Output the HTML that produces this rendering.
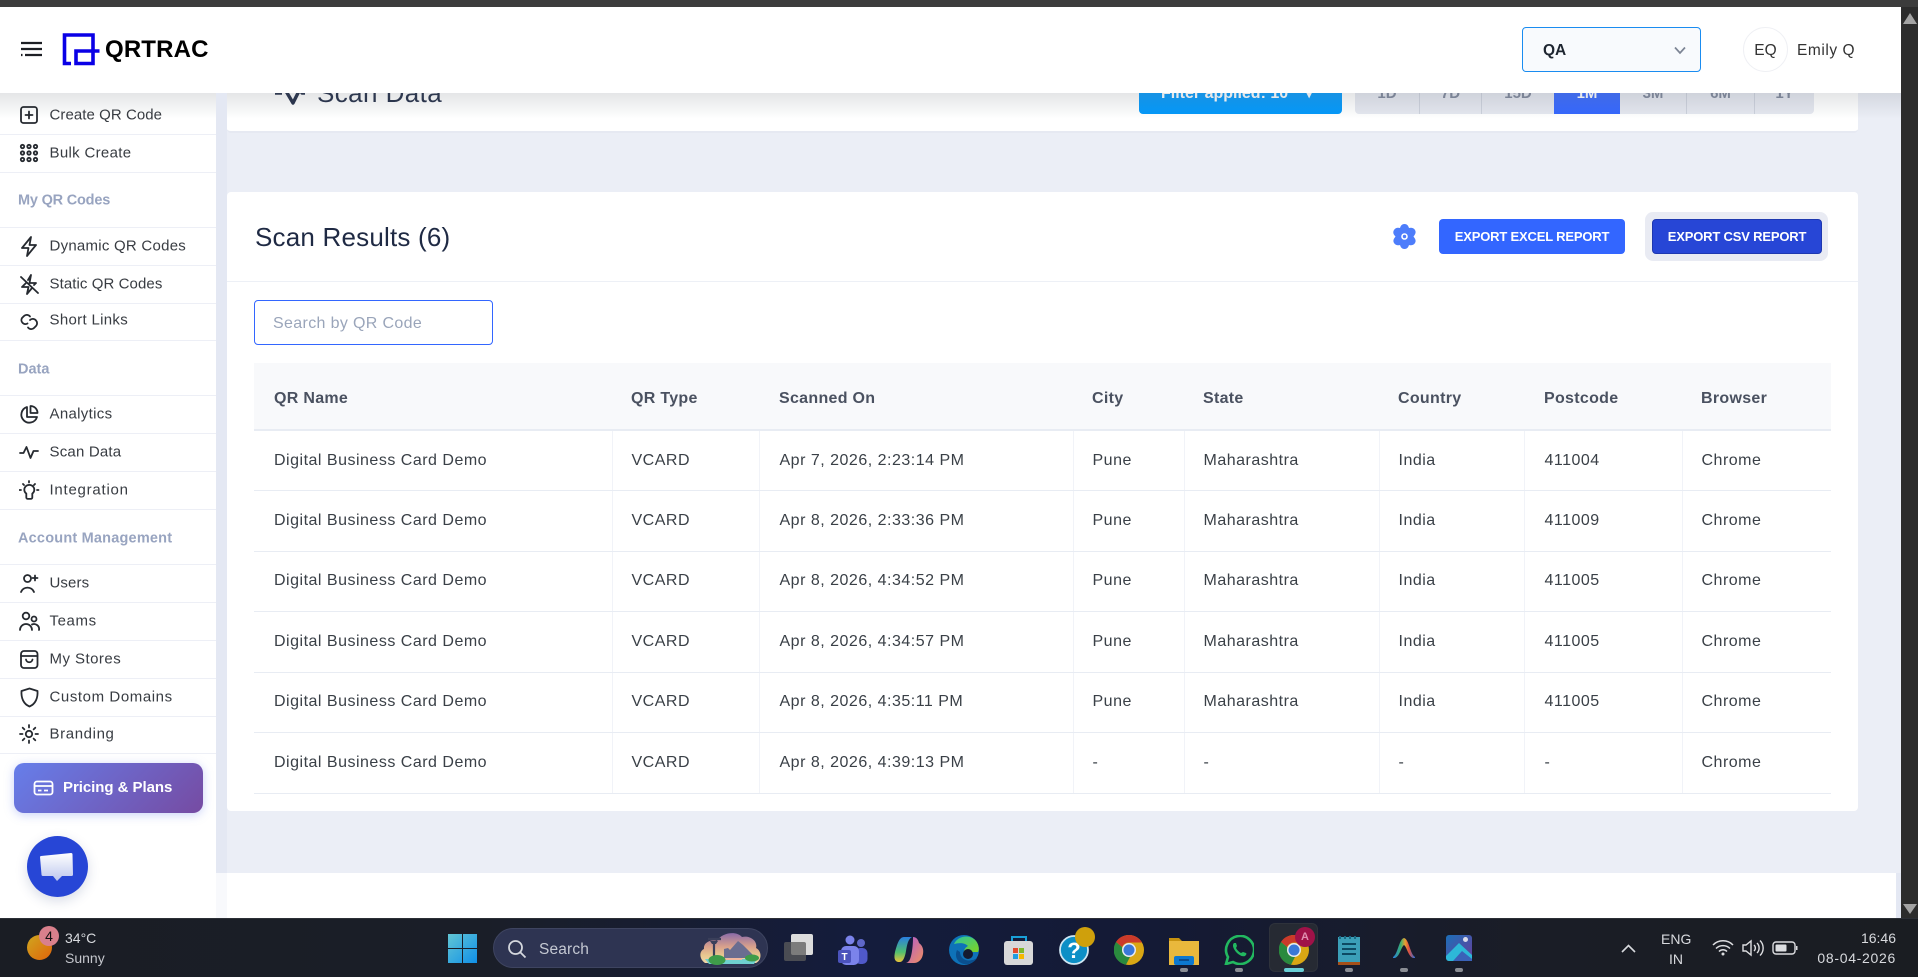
<!DOCTYPE html>
<html lang="en"><head><meta charset="utf-8"><title>QRTRAC - Scan Data</title>
<style>
*{box-sizing:border-box}
html,body{margin:0;padding:0;width:1918px;height:977px;overflow:hidden;background:#ebeef6;font-family:"Liberation Sans",sans-serif;color:#333}
.a{position:absolute}
.t{position:absolute;white-space:nowrap;line-height:20px;transform:translateY(-10px)}
.side{position:absolute;left:0;top:93px;width:216px;height:825px;background:#fff}
.nav{position:absolute;left:49.5px;font-size:15px;letter-spacing:.32px;color:#383c42;white-space:nowrap;line-height:20px;transform:translateY(-9.5px)}
.sec{position:absolute;left:18px;font-size:14.5px;font-weight:700;color:#98a4c0;white-space:nowrap;line-height:20px;transform:translateY(-9.5px)}
.ln{position:absolute;left:0;width:216px;height:1px;background:#edeff6}
.ic{position:absolute;left:19px;width:21px;height:21px;fill:none;stroke:#262a30;stroke-width:1.8;stroke-linecap:round;stroke-linejoin:round}
.card{position:absolute;background:#fff;border-radius:4px}
table{position:absolute;left:254px;top:363px;width:1577px;border-collapse:collapse;table-layout:fixed;font-size:16px;letter-spacing:.5px;color:#3a4047}
th{height:67px;background:#f8f9fb;text-align:left;font-weight:700;font-size:16px;letter-spacing:.3px;color:#4a5160;padding:6px 0 0 19px;border-bottom:2px solid #e8ecf3}
td{height:60.5px;padding:0 0 0 19px;border-bottom:1px solid #e8ecf3;border-right:1px solid #f1f3f8}
td:last-child{border-right:0}
.tb{position:absolute;left:0;top:918px;width:1918px;height:59px;background:linear-gradient(90deg,#1a1d24 0,#1a1e28 25%,#141c3c 45%,#141a35 60%,#1a1d26 80%,#1a1d22 100%);border-top:1px solid #2c2f36}
.tbi{position:absolute;top:935px;width:30px;height:30px}
.dot{position:absolute;top:968px;width:8px;height:4px;border-radius:2px;background:#8a8d94}
.tw{position:absolute;font-size:14px;color:#d8dade;white-space:nowrap;line-height:18px;transform:translateY(-9px)}
.seg{position:absolute;top:70px;height:44px;text-align:center;line-height:48px;font-size:15px;font-weight:700;color:#7c8599;border-right:1px solid #ccd1dc}
</style></head><body>

<!-- main page card 1 -->
<div class="card" style="left:227px;top:60px;width:1631px;height:73px;border-bottom:2px solid #e6e9f2"></div>
<svg class="a" style="left:275px;top:80px" width="30" height="26" viewBox="0 0 30 26" fill="none" stroke="#1f2a44" stroke-width="3.400" stroke-linejoin="round"><path d="M0 13H7M8 6 18 23 25 9 27 13H30"/></svg>
<div class="t" style="left:317px;top:93px;font-size:26px;letter-spacing:.42px;color:#1f2a44">Scan Data</div>
<div class="a" style="left:1139px;top:70px;width:203px;height:44px;background:#0098fb;border-radius:4px;color:#fff;font-size:16px;font-weight:700;line-height:48px;padding-left:22px">Filter applied: 10 <span style="margin-left:14px;font-size:10px">&#9662;</span></div>
<div class="a" style="left:1355px;top:70px;width:459px;height:44px;background:#e5e8f0;border-radius:4px"></div>
<div class="seg" style="left:1355px;width:65px">1D</div>
<div class="seg" style="left:1420px;width:62px">7D</div>
<div class="seg" style="left:1482px;width:72px;border:0">15D</div>
<div class="seg" style="left:1554px;width:66px;background:#3366ff;color:#fff;border:0">1M</div>
<div class="seg" style="left:1620px;width:67px">3M</div>
<div class="seg" style="left:1687px;width:68px">6M</div>
<div class="seg" style="left:1755px;width:59px;border:0">1Y</div>

<!-- header fade under top bar -->
<div class="a" style="left:0;top:93px;width:1901px;height:26px;background:linear-gradient(180deg,rgba(120,125,135,.2),rgba(120,125,135,0))"></div>

<!-- card 2 -->
<div class="card" style="left:227px;top:192px;width:1631px;height:619px"></div>
<div class="a" style="left:227px;top:281px;width:1631px;height:1px;background:#edf0f6"></div>
<div class="t" style="left:255px;top:237px;font-size:26px;letter-spacing:.2px;color:#1f2a44">Scan Results (6)</div>
<svg class="a" style="left:1391px;top:223px" width="27" height="27" viewBox="0 0 27 27"><path fill="#4d7dfb" d="M13.500 1c3 0 4 2.400 4.500 4 1.800-.5 4.500-.5 6 2s0 4.500-1.500 6.500c1.500 2 3 4 1.500 6.500s-4.200 2.500-6 2c-.5 1.600-1.500 4-4.500 4s-4-2.400-4.500-4c-1.800.5-4.500.5-6-2s0-4.500 1.500-6.500C2.500 11.500 1.500 9.500 3 7s4.200-2.500 6-2c.5-1.600 1.500-4 4.500-4z"/><circle cx="13.500" cy="13.500" r="3.300" fill="#fff"/><circle cx="13.500" cy="13.500" r="1.700" fill="#4d7dfb"/></svg>
<div class="a" style="left:1439px;top:219px;width:186px;height:35px;background:#3366ff;border-radius:4px;color:#fff;font-size:13px;letter-spacing:-.18px;font-weight:700;text-align:center;line-height:35px">EXPORT EXCEL REPORT</div>
<div class="a" style="left:1645px;top:212px;width:183px;height:49px;background:#e9ebf3;border-radius:8px"></div>
<div class="a" style="left:1652px;top:219px;width:170px;height:35px;background:#2746d6;border-radius:4px;border:1px solid #1e38b0;color:#fff;font-size:13px;letter-spacing:-.18px;font-weight:700;text-align:center;line-height:33px">EXPORT CSV REPORT</div>
<div class="a" style="left:254px;top:300px;width:239px;height:45px;border:1px solid #3366ff;border-radius:4px;background:#fff;color:#9aa5ba;font-size:16px;letter-spacing:.35px;line-height:45px;padding-left:18px">Search by QR Code</div>

<table>
<colgroup><col style="width:358px"><col style="width:147px"><col style="width:314px"><col style="width:111px"><col style="width:195px"><col style="width:145px"><col style="width:158px"><col style="width:149px"></colgroup>
<tr><th style="padding-left:20px">QR Name</th><th>QR Type</th><th style="padding-left:20px">Scanned On</th><th>City</th><th>State</th><th>Country</th><th style="padding-left:20px">Postcode</th><th>Browser</th></tr>
<tr><td style="padding-left:20px">Digital Business Card Demo</td><td>VCARD</td><td style="padding-left:20px">Apr 7, 2026, 2:23:14 PM</td><td>Pune</td><td>Maharashtra</td><td>India</td><td style="padding-left:20px">411004</td><td>Chrome</td></tr>
<tr><td style="padding-left:20px">Digital Business Card Demo</td><td>VCARD</td><td style="padding-left:20px">Apr 8, 2026, 2:33:36 PM</td><td>Pune</td><td>Maharashtra</td><td>India</td><td style="padding-left:20px">411009</td><td>Chrome</td></tr>
<tr><td style="padding-left:20px">Digital Business Card Demo</td><td>VCARD</td><td style="padding-left:20px">Apr 8, 2026, 4:34:52 PM</td><td>Pune</td><td>Maharashtra</td><td>India</td><td style="padding-left:20px">411005</td><td>Chrome</td></tr>
<tr><td style="padding-left:20px">Digital Business Card Demo</td><td>VCARD</td><td style="padding-left:20px">Apr 8, 2026, 4:34:57 PM</td><td>Pune</td><td>Maharashtra</td><td>India</td><td style="padding-left:20px">411005</td><td>Chrome</td></tr>
<tr><td style="padding-left:20px">Digital Business Card Demo</td><td>VCARD</td><td style="padding-left:20px">Apr 8, 2026, 4:35:11 PM</td><td>Pune</td><td>Maharashtra</td><td>India</td><td style="padding-left:20px">411005</td><td>Chrome</td></tr>
<tr><td style="padding-left:20px">Digital Business Card Demo</td><td>VCARD</td><td style="padding-left:20px">Apr 8, 2026, 4:39:13 PM</td><td>-</td><td>-</td><td>-</td><td style="padding-left:20px">-</td><td>Chrome</td></tr>
</table>

<!-- bottom white footer -->
<div class="a" style="left:216px;top:873px;width:1680px;height:45px;background:#fff"></div>
<div class="a" style="left:216px;top:873px;width:11px;height:45px;background:#f8f9fc"></div>

<!-- sidebar -->
<div class="side"></div>
<div class="a" style="left:0;top:93px;width:216px;height:26px;background:linear-gradient(180deg,rgba(120,125,135,.2),rgba(120,125,135,0))"></div>
<div class="a" style="left:216px;top:93px;width:11px;height:780px;background:#e4e8f3"></div>

<div class="ln" style="top:134px"></div><div class="ln" style="top:172px"></div><div class="ln" style="top:227px"></div><div class="ln" style="top:265px"></div><div class="ln" style="top:303px"></div><div class="ln" style="top:340px"></div><div class="ln" style="top:395px"></div><div class="ln" style="top:433px"></div><div class="ln" style="top:471px"></div><div class="ln" style="top:509px"></div><div class="ln" style="top:564px"></div><div class="ln" style="top:602px"></div><div class="ln" style="top:640px"></div><div class="ln" style="top:678px"></div><div class="ln" style="top:716px"></div><div class="ln" style="top:753px"></div>

<svg class="ic" style="top:105px" viewBox="0 0 21 21"><rect x="2" y="2" width="16" height="16" rx="2.500"/><path d="M10 6.500v7M6.500 10h7"/></svg>
<div class="nav" style="top:115px;letter-spacing:.06px">Create QR Code</div>
<svg class="ic" style="top:143px" viewBox="0 0 21 21" stroke-width="1.500"><circle cx="3.500" cy="3.500" r="1.700"/><circle cx="10" cy="3.500" r="1.700"/><circle cx="16.500" cy="3.500" r="1.700"/><circle cx="3.500" cy="10" r="1.700"/><circle cx="10" cy="10" r="1.700"/><circle cx="16.500" cy="10" r="1.700"/><circle cx="3.500" cy="16.500" r="1.700"/><circle cx="10" cy="16.500" r="1.700"/><circle cx="16.500" cy="16.500" r="1.700"/></svg>
<div class="nav" style="top:153px">Bulk Create</div>
<div class="sec" style="top:200px;letter-spacing:-.2px">My QR Codes</div>
<svg class="ic" style="top:236px" viewBox="0 0 21 21"><path d="M12 1 3 12h6.500L8 20l9-11h-6.500z"/></svg>
<div class="nav" style="top:246px;letter-spacing:.25px">Dynamic QR Codes</div>
<svg class="ic" style="top:274px" viewBox="0 0 21 21"><path d="M12 1 9 6M7 9l-4 4h6.500L8 20l5-6M15 11l2-2h-6.500L12 1M2 3l17 16"/></svg>
<div class="nav" style="top:284px;letter-spacing:.08px">Static QR Codes</div>
<svg class="ic" style="top:311px" viewBox="0 0 21 21"><path d="M8.500 12.500A4 4 0 0 1 3 7l2-2a4 4 0 0 1 6 .5M11 9a4 4 0 0 1 6 .5 4 4 0 0 1 0 5.500l-2 2a4 4 0 0 1-6-.5"/></svg>
<div class="nav" style="top:320px">Short Links</div>
<div class="sec" style="top:369px">Data</div>
<svg class="ic" style="top:404px" viewBox="0 0 21 21"><path d="M8 3a8 8 0 1 0 10 10H8z"/><path d="M11.500 2a7 7 0 0 1 7 7h-7z"/></svg>
<div class="nav" style="top:414px">Analytics</div>
<svg class="ic" style="top:442px" viewBox="0 0 21 21"><path d="M1 11h3.500L7.500 5l4 11 3-7h4.500"/></svg>
<div class="nav" style="top:452px;letter-spacing:.2px">Scan Data</div>
<svg class="ic" style="top:480px" viewBox="0 0 21 21" stroke-width="1.500"><path d="M7 14a5 5 0 1 1 6 0v4a1.500 1.500 0 0 1-1.500 1.500h-3A1.500 1.500 0 0 1 7 18z" transform="translate(.3 0) scale(1 .97)"/><path d="M10 1v1.500M2 10H.5M19.500 10H18M4 4l1 1M16 4l-1 1"/></svg>
<div class="nav" style="top:490px;letter-spacing:.76px">Integration</div>
<div class="sec" style="top:538px;letter-spacing:.2px">Account Management</div>
<svg class="ic" style="top:573px" viewBox="0 0 21 21"><circle cx="8.500" cy="5.500" r="3.500"/><path d="M2 19a7 7 0 0 1 13 0M16 2.500v5M13.500 5h5"/></svg>
<div class="nav" style="top:583px;letter-spacing:.1px">Users</div>
<svg class="ic" style="top:611px" viewBox="0 0 21 21"><circle cx="7" cy="5" r="3.300"/><circle cx="15" cy="8" r="2.500"/><path d="M1 19a6 6 0 0 1 12 0M13 13.500a5 5 0 0 1 7 5.500"/></svg>
<div class="nav" style="top:621px;letter-spacing:.6px">Teams</div>
<svg class="ic" style="top:649px" viewBox="0 0 21 21"><rect x="2" y="2" width="16.500" height="17" rx="3"/><path d="M2 7h16.500M7 10.500a3.300 3.300 0 0 0 6.500 0"/></svg>
<div class="nav" style="top:659px;letter-spacing:.46px">My Stores</div>
<svg class="ic" style="top:687px" viewBox="0 0 21 21"><path d="M10.500 1.500 18.500 4c.5 7-2 13-8 15.500C4.500 17 2 11 2.500 4z"/></svg>
<div class="nav" style="top:697px;letter-spacing:.58px">Custom Domains</div>
<svg class="ic" style="top:724px" viewBox="0 0 21 21"><circle cx="10" cy="10" r="3.200"/><path d="M10 1v2.500M10 16.500V19M1 10h2.500M16.500 10H19M3.700 3.700l1.700 1.700M14.600 14.600l1.700 1.700M3.700 16.300l1.700-1.700M14.600 5.400l1.700-1.700"/></svg>
<div class="nav" style="top:734px;letter-spacing:.62px">Branding</div>

<div class="a" style="left:14px;top:763px;width:189px;height:50px;border-radius:10px;background:linear-gradient(135deg,#667eea,#764ba2);box-shadow:0 2px 10px rgba(102,126,234,.35)"></div>
<svg class="a" style="left:33px;top:780px" width="21" height="16" viewBox="0 0 21 16" fill="none" stroke="#fff" stroke-width="1.800"><rect x="1.500" y="1.500" width="18" height="13" rx="2.500"/><path d="M1.500 6h18M5 10.500h3.500M11 10.500h4"/></svg>
<div class="t" style="left:63px;top:788px;font-size:15px;font-weight:700;color:#fff;letter-spacing:-.05px">Pricing &amp; Plans</div>

<div class="a" style="left:27px;top:836px;width:61px;height:61px;border-radius:50%;background:#2746d6;box-shadow:0 4px 12px rgba(40,60,120,.18)"></div>
<svg class="a" style="left:39px;top:852px" width="36" height="30" viewBox="0 0 36 30"><defs><linearGradient id="cg" x1="0" y1="0" x2="0" y2="1"><stop offset="0" stop-color="#fff"/><stop offset="1" stop-color="#bcc6ee"/></linearGradient></defs><path fill="url(#cg)" d="M2 4 32 1c1 0 1.500.5 1.500 1.500l.5 20c0 1-.5 1.500-1.500 1.500H23l-5 5-4-5H4c-1 0-1.500-.5-1.500-1.500L1 5c0-.5.5-1 1-1z"/></svg>

<!-- header -->
<div class="a" style="left:0;top:7px;width:1901px;height:86px;background:#fff"></div>
<svg class="a" style="left:20px;top:41px" width="23" height="16" viewBox="0 0 23 16" stroke="#1d1f24" stroke-width="2.200" fill="none"><path d="M1 2h21M1 8h21M5 14h17M1 14h1.500"/></svg>
<svg class="a" style="left:62px;top:33px" width="38" height="33" viewBox="0 0 38 33" fill="none" stroke="#0a00e6" stroke-width="3.600"><path d="M9 30.500H2.500V2h28.500v28.500H14V18h23.500"/></svg>
<div class="t" style="left:105px;top:50px;font-size:24px;font-weight:700;color:#000;letter-spacing:.15px">QRTRAC</div>

<div class="a" style="left:1522px;top:27px;width:179px;height:45px;background:#f8fafd;border:1px solid #1a8cf0;border-radius:4px"></div>
<div class="t" style="left:1543px;top:51px;font-size:15.500px;font-weight:700;color:#1e2530">QA</div>
<svg class="a" style="left:1674px;top:46px" width="12" height="9" viewBox="0 0 12 9" fill="none" stroke="#7c8494" stroke-width="1.700"><path d="M1 1.500l5 5.500 5-5.500"/></svg>
<div class="a" style="left:1743px;top:27px;width:45px;height:45px;border:1px solid #eff0f4;border-radius:50%;text-align:center;line-height:45px;font-size:15.500px;color:#333">EQ</div>
<div class="t" style="left:1797px;top:51px;font-size:15.500px;color:#333;letter-spacing:.55px">Emily Q</div>

<!-- top bar and scrollbar -->
<div class="a" style="left:0;top:0;width:1918px;height:7px;background:#3c3c3c"></div>
<div class="a" style="left:1901px;top:7px;width:17px;height:911px;background:#2c2c2c"></div>
<div class="a" style="left:1896px;top:873px;width:5px;height:45px;background:#e4e8f3"></div>
<svg class="a" style="left:1903px;top:13px" width="14" height="11"><path d="M7 0l7 11H0z" fill="#a3a3a3"/></svg>
<svg class="a" style="left:1903px;top:904px" width="14" height="10"><path d="M7 10L0 0h14z" fill="#a3a3a3"/></svg>

<!-- taskbar -->
<div class="tb"></div>
<div class="a" style="left:27px;top:935px;width:25px;height:25px;border-radius:50%;background:linear-gradient(135deg,#cfa71f,#e0640a)"></div>
<div class="a" style="left:39px;top:926px;width:20px;height:20px;border-radius:50%;background:#d9808c;color:#111;font-size:14px;text-align:center;line-height:20px">4</div>
<div class="tw" style="left:65px;top:938px">34°C</div>
<div class="tw" style="left:65px;top:958px;color:#c4c6cc">Sunny</div>

<svg class="a" style="left:448px;top:934px" width="29" height="29" viewBox="0 0 29 29"><defs><linearGradient id="wg" x1="0" y1="0" x2="1" y2="1"><stop offset="0" stop-color="#62c6d4"/><stop offset="1" stop-color="#0f8fe8"/></linearGradient></defs><path fill="url(#wg)" d="M0 0h14v14H0zM15 0h14v14H15zM0 15h14v14H0zM15 15h14v14H15z"/></svg>
<div class="a" style="left:493px;top:928px;width:275px;height:40px;border-radius:20px;background:#2e3452;border:1px solid #3e4460"></div>
<svg class="a" style="left:507px;top:939px" width="20" height="20" viewBox="0 0 20 20" fill="none" stroke="#d5d8de" stroke-width="1.800"><circle cx="8.500" cy="8.500" r="6.500"/><path d="M13 13l5.500 5.500"/></svg>
<div class="tw" style="left:539px;top:950px;font-size:15.500px;color:#c4c8d2;letter-spacing:.15px">Search</div>
<svg class="a" style="left:700px;top:932px" width="62" height="33" viewBox="0 0 62 33"><defs><linearGradient id="sky" x1="0" y1="0" x2="0" y2="1"><stop offset="0" stop-color="#8a6aa8"/><stop offset=".45" stop-color="#d8a08c"/><stop offset=".75" stop-color="#e8c890"/><stop offset="1" stop-color="#f0d8a8"/></linearGradient></defs><path d="M5 31C-1 27-1 19 4 17 3 10 12 7 17 9 21 1 36-2 42 5 50 3 58 9 56 16 62 19 62 28 56 31z" fill="url(#sky)"/><path d="M24 26V17l4-1 2 2 8-9 5 4 8 8 5 5z" fill="#6a6d90"/><path d="M14 26V11M8 7h13" stroke="#3a3f5a" stroke-width="2.200"/><path d="M10 9h8l-2 3h-4z" fill="#3a3f5a"/><path d="M5 27H57l-3 5H9z" fill="#6fd0cf"/><path d="M24 26H42v2H24z" fill="#f0b8a0"/><ellipse cx="17" cy="28" rx="8.500" ry="5" fill="#3f9c4a"/><ellipse cx="52" cy="26" rx="7" ry="3.500" fill="#3f9c4a"/></svg>

<!-- task view -->
<svg class="a" style="left:784px;top:934px" width="30" height="28" viewBox="0 0 30 28"><rect x="7" y="0" width="22" height="21" rx="2" fill="#dcdcdc"/><rect x="0" y="8" width="22" height="19" rx="2" fill="#5c5c5c" fill-opacity=".75"/></svg>
<!-- teams -->
<svg class="tbi" style="left:838px" viewBox="0 0 30 30"><circle cx="12" cy="5" r="4.500" fill="#7b83eb"/><circle cx="23" cy="8" r="4" fill="#5f68c9"/><rect x="17" y="13" width="12.500" height="16" rx="5" fill="#5059c9"/><rect x="3" y="11" width="18" height="19" rx="5" fill="#7b83eb"/><rect x="0" y="15" width="13" height="13" rx="2" fill="#4b53bc"/><text x="6.500" y="25" font-size="10" font-weight="700" fill="#fff" text-anchor="middle" font-family="Liberation Sans,sans-serif">T</text></svg>
<!-- copilot -->
<svg class="tbi" style="left:894px" viewBox="0 0 30 30"><defs><linearGradient id="cpa" x1="0" y1="0" x2="0" y2="1"><stop offset="0" stop-color="#2a7fe0"/><stop offset=".6" stop-color="#4fbe70"/><stop offset="1" stop-color="#e8c23a"/></linearGradient><linearGradient id="cpb" x1="0" y1="0" x2="1" y2="1"><stop offset="0" stop-color="#b05ad0"/><stop offset="1" stop-color="#f09060"/></linearGradient></defs><path d="M10 2h8c-4 2-5 8-6 14-1 6-3 11-6 11H4C0 26 0 22 1 17 3 10 5 2 10 2z" fill="url(#cpa)"/><path d="M19 2c3 0 5 2 6 6 3 2 5 6 4 11-1 6-5 9-9 9h-8c4-1 5-6 6-12 1-6 1-12 1-14z" fill="url(#cpb)"/></svg>
<!-- edge -->
<svg class="tbi" style="left:949px" viewBox="0 0 30 30"><defs><linearGradient id="edg" x1="0" y1="0" x2="1" y2="1"><stop offset="0" stop-color="#2cc4a0"/><stop offset="1" stop-color="#7ed321"/></linearGradient></defs><circle cx="15" cy="15" r="15" fill="#0e72b8"/><path d="M5 9C8 2 18-1 25 4c4 3 6 9 4 13H15c0-3 2-5 4-6-4-4-10-3-14-2z" fill="url(#edg)"/><path d="M11 17c0 6 6 10 12 8 2 0 3-1 5-2-3 5-9 7-13 6C9 28 5 22 8 15z" fill="#0a4f8f"/><circle cx="19" cy="19" r="5" fill="#141a30"/></svg>
<!-- store -->
<svg class="tbi" style="left:1004px" viewBox="0 0 30 30"><path d="M8 6V2h14v4" fill="none" stroke="#19a0d8" stroke-width="2"/><rect x="0" y="6" width="29" height="24" rx="3" fill="#d8d8d8"/><rect x="9" y="13" width="5" height="5" fill="#e24a2c"/><rect x="15" y="13" width="5" height="5" fill="#7fb92b"/><rect x="9" y="19" width="5" height="5" fill="#1e9de0"/><rect x="15" y="19" width="5" height="5" fill="#f5b800"/></svg>
<!-- help -->
<svg class="tbi" style="left:1059px" viewBox="0 0 30 30"><circle cx="15" cy="15" r="14" fill="#0d8fc6" stroke="#cfe6f2" stroke-width="1.800"/><text x="15" y="23" font-size="22" font-weight="700" fill="#fff" text-anchor="middle" font-family="Liberation Sans,sans-serif">?</text></svg>
<div class="a" style="left:1075px;top:927px;width:20px;height:20px;border-radius:50%;background:#cfa00c"></div>
<!-- chrome -->
<svg class="tbi" style="left:1114px" viewBox="0 0 30 30"><circle cx="15" cy="15" r="15" fill="#d9a714"/><path d="M15 0A15 15 0 0 1 28 7.500H15a7.500 7.500 0 0 0-7 4.500L2 7A15 15 0 0 1 15 0z" fill="#cb3a2a"/><path d="M2 7A15 15 0 0 0 12 29.700L18 18a7.500 7.500 0 0 1-10-6z" fill="#2a8a3e"/><circle cx="15" cy="15" r="7" fill="#e8eaf0"/><circle cx="15" cy="15" r="5.500" fill="#3a78d8"/></svg>
<!-- folder -->
<svg class="tbi" style="left:1169px" viewBox="0 0 30 30"><path d="M0 3h10l3 3h17v24H0z" fill="#c7920f"/><rect x="0" y="6" width="30" height="24" fill="#e9b83c"/><rect x="5" y="21" width="20" height="9" rx="2" fill="#0d78cf"/><path d="M10 25h10" stroke="#0a3f7a" stroke-width="1.500"/></svg>
<!-- whatsapp -->
<svg class="tbi" style="left:1224px" viewBox="0 0 30 30"><path d="M2 29l2-7A14 14 0 1 1 9 27z" fill="none" stroke="#22b860" stroke-width="2.600"/><path d="M10 8c-2 2-1 5 2 9 3 3 6 5 9 4 1-1 2-2 1-3l-3-1-2 1c-2-1-4-3-5-5l1-2-1-3z" fill="#22b860"/></svg>
<!-- active chrome -->
<div class="a" style="left:1269px;top:923px;width:49px;height:49px;border-radius:6px;background:#262a33;border:1px solid #2e323b"></div>
<svg class="tbi" style="left:1279px" viewBox="0 0 30 30"><circle cx="15" cy="15" r="15" fill="#d9a714"/><path d="M15 0A15 15 0 0 1 28 7.500H15a7.500 7.500 0 0 0-7 4.500L2 7A15 15 0 0 1 15 0z" fill="#cb3a2a"/><path d="M2 7A15 15 0 0 0 12 29.700L18 18a7.500 7.500 0 0 1-10-6z" fill="#2a8a3e"/><circle cx="15" cy="15" r="7" fill="#e8eaf0"/><circle cx="15" cy="15" r="5.500" fill="#3a78d8"/></svg>
<div class="a" style="left:1295px;top:927px;width:20px;height:20px;border-radius:50%;background:#a01248;color:#e090b0;font-size:11px;font-weight:700;text-align:center;line-height:20px">A</div>
<!-- notepad -->
<svg class="tbi" style="left:1337px;width:24px" viewBox="0 0 24 30"><rect x="1" y="2" width="22" height="26" fill="#3b9fb8"/><rect x="1" y="27" width="22" height="3" fill="#a5501a"/><path d="M5 9h14M5 14h14M5 19h14" stroke="#0d4a63" stroke-width="2"/><path d="M3 1v3M8 1v3M13 1v3M18 1v3" stroke="#1a6a84" stroke-width="2"/></svg>
<!-- vee icon -->
<svg class="a" style="left:1393px;top:938px" width="22" height="20" viewBox="0 0 22 20"><defs><linearGradient id="vg" x1="0" y1="0" x2="1" y2="0"><stop offset="0" stop-color="#2a7de0"/><stop offset=".35" stop-color="#38b070"/><stop offset=".55" stop-color="#e8a030"/><stop offset=".72" stop-color="#e05040"/><stop offset="1" stop-color="#2a6fd8"/></linearGradient></defs><path d="M0 19C5 16 6 1 11 0c5 1 6 16 11 19v1h-2C15 18 14 9 11 7 8 9 7 18 2 20H0z" fill="url(#vg)"/></svg>
<!-- photos -->
<svg class="tbi" style="left:1446px;width:26px;height:26px" viewBox="0 0 26 26"><defs><linearGradient id="pg" x1="0" y1="0" x2="1" y2="1"><stop offset="0" stop-color="#1b6fb8"/><stop offset="1" stop-color="#6a3d9a"/></linearGradient></defs><rect width="26" height="26" rx="3" fill="url(#pg)"/><path d="M0 21 13 8l13 12v3a3 3 0 0 1-3 3H3a3 3 0 0 1-3-3z" fill="#2db8d8"/><path d="M7 26l9-10 10 8v2z" fill="#3a62b8"/><circle cx="19.500" cy="4.500" r="2.500" fill="#dcdcea"/></svg>

<div class="dot" style="left:1180px"></div><div class="dot" style="left:1235px"></div><div class="a" style="left:1284px;top:968px;width:20px;height:4px;border-radius:2px;background:#68cfd6"></div><div class="dot" style="left:1345px"></div><div class="dot" style="left:1400px"></div><div class="dot" style="left:1455px"></div>

<svg class="a" style="left:1621px;top:944px" width="15" height="9" viewBox="0 0 15 9" fill="none" stroke="#d8dade" stroke-width="1.600"><path d="M1 8l6.500-6.500L14 8"/></svg>
<div class="tw" style="left:1661px;width:30px;text-align:center;top:939px">ENG</div>
<div class="tw" style="left:1661px;width:30px;text-align:center;top:959px">IN</div>
<svg class="a" style="left:1712px;top:939px" width="22" height="17" viewBox="0 0 22 17" fill="none" stroke="#dcdde0" stroke-width="1.500"><path d="M1 6a14 14 0 0 1 20 0M4 9.500a10 10 0 0 1 14 0M7 12.500a5.500 5.500 0 0 1 8 0"/><circle cx="11" cy="15" r="1.500" fill="#dcdde0" stroke="none"/></svg>
<svg class="a" style="left:1742px;top:939px" width="22" height="18" viewBox="0 0 22 18" fill="none" stroke="#dcdde0" stroke-width="1.400"><path d="M1 6h3l5-4v14l-5-4H1zM12 6a4 4 0 0 1 0 6M15 4a7 7 0 0 1 0 10M18 1.500a10.500 10.500 0 0 1 0 15"/></svg>
<svg class="a" style="left:1772px;top:941px" width="26" height="15" viewBox="0 0 26 15" fill="none"><rect x="1" y="1" width="22" height="12" rx="3" stroke="#dcdde0" stroke-width="1.400"/><rect x="3.500" y="3.500" width="11" height="7" rx="1" fill="#dcdde0"/><rect x="24" y="5" width="1.500" height="4" fill="#dcdde0"/></svg>
<div class="tw" style="right:22px;top:938px">16:46</div>
<div class="tw" style="right:22px;top:958px;letter-spacing:.7px">08-04-2026</div>
</body></html>
